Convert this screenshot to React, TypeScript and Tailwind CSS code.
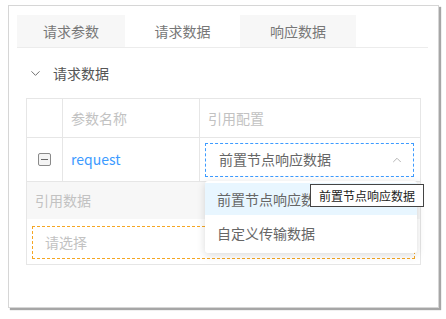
import { ChevronDown, ChevronUp } from "lucide-react";

export default function App() {
    const font = { fontFamily: '"Noto Sans CJK SC", "Noto Sans", sans-serif' };
    return (
        <div className="w-[446px] h-[319px] bg-white pt-[5px] pl-[8px]" style={font}>
            <div className="w-[431px] h-[303px] bg-white border border-[#d6d6d6] shadow-[2px_2px_1px_rgba(0,0,0,0.35)] pt-[9px] pl-[8px]">
                <div className="flex w-[411px] h-[33px] border-b border-[#ececec] text-[14px] text-[#777]">
                    <div className="w-[108px] flex items-center justify-center bg-[#f7f7f7]">请求参数</div>
                    <div className="w-[115px] flex items-center justify-center bg-white">请求数据</div>
                    <div className="w-[116px] flex items-center justify-center bg-[#f7f7f7]">响应数据</div>
                </div>
                <div className="flex items-center h-[50px] pl-[11px] text-[14px] text-[#555]">
                    <ChevronDown size={15} strokeWidth={1.5} className="text-[#666]" />
                    <span className="ml-[10px]">请求数据</span>
                </div>
                <div className="ml-[9px] w-[395px] border border-[#e6e6e6] text-[14px]">
                    <div className="flex h-[39px] border-b border-[#e6e6e6] text-[#c2c2c2]">
                        <div className="w-[36px] border-r border-[#e6e6e6]" />
                        <div className="w-[137px] border-r border-[#e6e6e6] flex items-center pl-[8px]">参数名称</div>
                        <div className="flex-1 flex items-center pl-[8px]">引用配置</div>
                    </div>
                    <div className="flex h-[44px] border-b border-[#e6e6e6]">
                        <div className="w-[36px] border-r border-[#e6e6e6] flex items-center justify-center">
                            <div className="w-[13px] h-[13px] border border-[#8a8a8a] rounded-[2px] bg-[#f4f4f4] flex items-center justify-center">
                                <div className="w-[7px] h-[1px] bg-[#666]" />
                            </div>
                        </div>
                        <div className="w-[137px] border-r border-[#e6e6e6] flex items-center pl-[8px] text-[#3d9bff]">request</div>
                        <div className="flex-1 flex items-center pl-[5px] pr-[6px] relative">
                            <div className="w-full h-[34px] border border-dashed border-[#3d9bff] flex items-center justify-between pl-[13px] pr-[9px] text-[#666]">
                                <span>前置节点响应数据</span>
                                <ChevronUp size={14} strokeWidth={1.5} className="text-[#aaa]" />
                            </div>
                            <div className="absolute left-[5px] top-[43px] w-[212px] bg-white rounded-[3px] shadow-[0_2px_8px_rgba(0,0,0,0.15)] py-[2px] z-10 text-[#666]">
                                <div className="h-[32px] flex items-center pl-[12px] bg-[#e8f6ff]">前置节点响应数据</div>
                                <div className="h-[36px] flex items-center pl-[12px]">自定义传输数据</div>
                            </div>
                            <div className="absolute left-[110px] top-[46px] w-[114px] h-[23px] bg-white border border-[#444] flex items-center justify-center text-[12px] text-[#222] z-20">
                                前置节点响应数据
                            </div>
                        </div>
                    </div>
                    <div className="h-[37px] bg-[#f7f7f7] flex items-center pl-[8px] text-[#c2c2c2]">引用数据</div>
                    <div className="h-[45px] pt-[7px] pl-[5px] pr-[5px]">
                        <div className="h-[33px] border border-dashed border-[#f5a623] flex items-center pl-[12px] text-[#c2c2c2]">请选择</div>
                    </div>
                </div>
            </div>
        </div>
    );
}
